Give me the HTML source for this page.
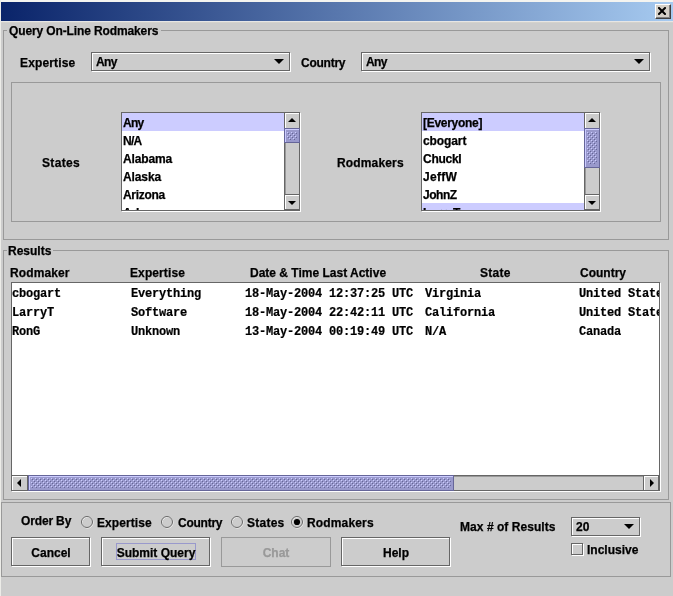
<!DOCTYPE html>
<html><head><meta charset="utf-8">
<style>
html,body{margin:0;padding:0;}
body{will-change:transform;width:673px;height:596px;background:#ccc;position:relative;overflow:hidden;font-family:"Liberation Sans",sans-serif;font-size:12px;font-weight:bold;color:#000;}
.a{position:absolute;}
.t{-webkit-text-stroke:0.25px #000;position:absolute;white-space:nowrap;line-height:15px;height:15px;margin-top:1px;}
.m{-webkit-text-stroke:0.2px #000;position:absolute;white-space:pre;line-height:15px;height:15px;margin-top:1px;font-family:"Liberation Mono",monospace;font-weight:bold;font-size:12px;letter-spacing:-0.2px;}
.grp{position:absolute;border:1px solid #999;box-sizing:border-box;}
.lbl{position:absolute;background:#ccc;height:15px;}
/* metal button-like border: element is (w-1)x(h-1) */
.mb{position:absolute;box-sizing:border-box;border:1px solid #666;box-shadow:inset 1px 1px 0 #fff,1px 1px 0 #fff;background:#ccc;}
.sp{position:absolute;box-sizing:border-box;border:1px solid #666;box-shadow:1px 1px 0 #fff;background:#fff;}
.sel{position:absolute;background:#ccf;}
.dk{position:absolute;background:#666;}
.wh{position:absolute;background:#fff;}
.thumb{position:absolute;box-sizing:border-box;background:#99c;border:1px solid #669;box-shadow:inset 1px 1px 0 #ccf;}
svg{position:absolute;display:block;}
</style></head><body>
<!-- window frame bits -->
<div class="a" style="left:0;top:0;width:673px;height:2px;background:#f4f4f0"></div>
<div class="a" style="left:0;top:0;width:1px;height:596px;background:#ecece8"></div>
<div class="a" style="left:1px;top:21px;width:672px;height:1px;background:#e6e6e6"></div>
<div class="a" style="left:1px;top:22px;width:672px;height:1px;background:#d4d2cc"></div>
<div class="a" style="left:1px;top:2px;width:672px;height:19px;background:linear-gradient(to right,#0a246a,#a6caf0)"></div>
<!-- close button -->
<div class="a" style="left:655px;top:4px;width:16px;height:15px;box-sizing:border-box;background:#d4d0c8;border:1px solid;border-color:#fff #404040 #404040 #fff;box-shadow:inset -1px -1px 0 #808080"></div>
<svg style="left:658px;top:7px" width="8" height="8" viewBox="0 0 8 8"><path d="M1 1L7 7M7 1L1 7" stroke="#000" stroke-width="2" stroke-linecap="square" fill="none"/></svg>

<!-- Query group -->
<div class="grp" style="left:3px;top:30px;width:666px;height:210px"></div>
<div class="lbl" style="left:7px;top:23px;width:154px"></div>
<div class="t" style="left:9px;top:23px;letter-spacing:-0.12px">Query On-Line Rodmakers</div>

<div class="t" style="left:20px;top:55px;letter-spacing:0.14px">Expertise</div>
<div class="mb" style="left:91px;top:52px;width:199px;height:19px"></div>
<div class="t" style="left:96px;top:54px;letter-spacing:-0.6px">Any</div>
<svg style="left:274px;top:59px" width="10" height="5"><path d="M0 0h10l-5 5z" fill="#000"/></svg>

<div class="t" style="left:301px;top:55px;letter-spacing:-0.25px">Country</div>
<div class="mb" style="left:361px;top:52px;width:289px;height:19px"></div>
<div class="t" style="left:366px;top:54px;letter-spacing:-0.6px">Any</div>
<svg style="left:634px;top:59px" width="10" height="5"><path d="M0 0h10l-5 5z" fill="#000"/></svg>

<!-- inner panel -->
<div class="grp" style="left:11px;top:82px;width:650px;height:140px"></div>
<div class="t" style="left:42px;top:155px;letter-spacing:0.35px">States</div>
<div class="t" style="left:337px;top:155px;letter-spacing:0.15px">Rodmakers</div>

<!-- States list -->
<div class="sp" style="left:121px;top:112px;width:179px;height:99px;overflow:hidden"></div>
<div class="a" style="left:122px;top:113px;width:162px;height:97px;overflow:hidden">
  <div class="sel" style="left:0;top:0;width:162px;height:18px"></div>
  <div class="t" style="left:1px;top:2px;letter-spacing:-0.7px">Any</div>
  <div class="t" style="left:1px;top:20px;letter-spacing:-0.7px">N/A</div>
  <div class="t" style="left:1px;top:38px;letter-spacing:-0.15px">Alabama</div>
  <div class="t" style="left:1px;top:56px;letter-spacing:-0.1px">Alaska</div>
  <div class="t" style="left:1px;top:74px;letter-spacing:-0.3px">Arizona</div>
  <div class="t" style="left:1px;top:92px;letter-spacing:-0.2px">Arkansas</div>
</div>
<!-- States scrollbar -->
<div class="a" id="sb1" style="left:284px;top:113px;width:15px;height:97px;background:#ccc">
  <div class="dk" style="left:0;top:0;width:1px;height:97px"></div>
  <div class="a" style="left:1px;top:0;width:1px;height:97px;background:#999"></div>
  <!-- up button -->
  <div class="a" style="left:1px;top:0;width:14px;height:15px;background:#ccc;box-shadow:inset 1px 1px 0 #fff"></div>
  <div class="dk" style="left:0;top:15px;width:15px;height:1px"></div>
  <svg style="left:4px;top:5px" width="8" height="4"><path d="M0 4h8l-4 -4z" fill="#000"/></svg>
  <!-- thumb -->
  <div class="thumb" style="left:0;top:15px;width:16px;height:15px"></div>
  <svg style="left:3px;top:19px" width="10" height="8"><rect width="10" height="8" fill="url(#bump)"/></svg>
  <!-- down button -->
  <div class="dk" style="left:0;top:81px;width:15px;height:1px"></div>
  <div class="a" style="left:1px;top:82px;width:14px;height:15px;background:#ccc;box-shadow:inset 1px 1px 0 #fff"></div>
  <svg style="left:4px;top:88px" width="8" height="4"><path d="M0 0h8l-4 4z" fill="#000"/></svg>
  <div class="dk" style="left:1px;top:96px;width:14px;height:1px"></div>
</div>

<!-- Rodmakers list -->
<div class="sp" style="left:421px;top:112px;width:179px;height:99px"></div>
<div class="a" style="left:422px;top:113px;width:162px;height:97px;overflow:hidden">
  <div class="sel" style="left:0;top:0;width:162px;height:18px"></div>
  <div class="sel" style="left:0;top:90px;width:162px;height:18px"></div>
  <div class="t" style="left:1px;top:2px;letter-spacing:-0.28px">[Everyone]</div>
  <div class="t" style="left:1px;top:20px;letter-spacing:-0.1px">cbogart</div>
  <div class="t" style="left:1px;top:38px;letter-spacing:-0.28px">ChuckI</div>
  <div class="t" style="left:1px;top:56px;letter-spacing:0.3px">JeffW</div>
  <div class="t" style="left:1px;top:74px;letter-spacing:-0.45px">JohnZ</div>
  <div class="t" style="left:1px;top:92px">LarryT</div>
</div>
<div class="a" id="sb2" style="left:584px;top:113px;width:15px;height:97px;background:#ccc">
  <div class="dk" style="left:0;top:0;width:1px;height:97px"></div>
  <div class="a" style="left:1px;top:0;width:1px;height:97px;background:#999"></div>
  <div class="a" style="left:1px;top:0;width:14px;height:15px;background:#ccc;box-shadow:inset 1px 1px 0 #fff"></div>
  <div class="dk" style="left:0;top:15px;width:15px;height:1px"></div>
  <svg style="left:4px;top:5px" width="8" height="4"><path d="M0 4h8l-4 -4z" fill="#000"/></svg>
  <div class="thumb" style="left:0;top:15px;width:16px;height:40px"></div>
  <svg style="left:3px;top:19px" width="10" height="32"><rect width="10" height="32" fill="url(#bump)"/></svg>
  <div class="dk" style="left:0;top:81px;width:15px;height:1px"></div>
  <div class="a" style="left:1px;top:82px;width:14px;height:15px;background:#ccc;box-shadow:inset 1px 1px 0 #fff"></div>
  <svg style="left:4px;top:88px" width="8" height="4"><path d="M0 0h8l-4 4z" fill="#000"/></svg>
  <div class="dk" style="left:1px;top:96px;width:14px;height:1px"></div>
</div>

<!-- Results group -->
<div class="grp" style="left:3px;top:250px;width:666px;height:250px"></div>
<div class="lbl" style="left:7px;top:243px;width:46px"></div>
<div class="t" style="left:8px;top:243px">Results</div>
<div class="t" style="left:10px;top:265px;letter-spacing:0.1px">Rodmaker</div>
<div class="t" style="left:130px;top:265px;letter-spacing:0.1px">Expertise</div>
<div class="t" style="left:250px;top:265px">Date &amp; Time Last Active</div>
<div class="t" style="left:480px;top:265px;letter-spacing:0.3px">State</div>
<div class="t" style="left:580px;top:265px">Country</div>

<div class="sp" style="left:11px;top:282px;width:649px;height:209px"></div>
<div class="a" style="left:12px;top:283px;width:647px;height:192px;overflow:hidden">
  <div class="m" style="left:0;top:3px">cbogart</div>
  <div class="m" style="left:119px;top:3px">Everything</div>
  <div class="m" style="left:233px;top:3px">18-May-2004 12:37:25 UTC</div>
  <div class="m" style="left:413px;top:3px">Virginia</div>
  <div class="m" style="left:567px;top:3px">United States</div>
  <div class="m" style="left:0;top:22px">LarryT</div>
  <div class="m" style="left:119px;top:22px">Software</div>
  <div class="m" style="left:233px;top:22px">18-May-2004 22:42:11 UTC</div>
  <div class="m" style="left:413px;top:22px">California</div>
  <div class="m" style="left:567px;top:22px">United States</div>
  <div class="m" style="left:0;top:41px">RonG</div>
  <div class="m" style="left:119px;top:41px">Unknown</div>
  <div class="m" style="left:233px;top:41px">13-May-2004 00:19:49 UTC</div>
  <div class="m" style="left:413px;top:41px">N/A</div>
  <div class="m" style="left:567px;top:41px">Canada</div>
</div>
<!-- horizontal scrollbar -->
<div class="a" id="hsb" style="left:12px;top:475px;width:647px;height:15px;background:#ccc">
  <div class="dk" style="left:0;top:0;width:647px;height:1px"></div>
  <div class="a" style="left:0;top:1px;width:647px;height:1px;background:#999"></div>
  <!-- left button -->
  <div class="a" style="left:0;top:1px;width:15px;height:14px;background:#ccc;box-shadow:inset 1px 1px 0 #fff"></div>
  <div class="dk" style="left:15px;top:0;width:1px;height:15px"></div>
  <svg style="left:5px;top:4px" width="4" height="8"><path d="M4 0v8l-4 -4z" fill="#000"/></svg>
  <!-- thumb -->
  <div class="thumb" style="left:16px;top:0;width:426px;height:16px"></div>
  <svg style="left:19px;top:3px" width="420" height="10"><rect width="420" height="10" fill="url(#bump)"/></svg>
  <!-- right button -->
  <div class="dk" style="left:631px;top:0;width:1px;height:15px"></div>
  <div class="a" style="left:632px;top:1px;width:15px;height:14px;background:#ccc;box-shadow:inset 1px 1px 0 #fff"></div>
  <svg style="left:638px;top:4px" width="4" height="8"><path d="M0 0v8l4 -4z" fill="#000"/></svg>
  <div class="dk" style="left:646px;top:1px;width:1px;height:14px"></div>
</div>

<!-- bottom panel -->
<div class="grp" style="left:1px;top:502px;width:670px;height:75px"></div>
<div class="t" style="left:21px;top:513px;letter-spacing:-0.15px">Order By</div>

<svg style="left:81px;top:516px" width="13" height="13"><circle cx="6.5" cy="6.5" r="5.5" fill="#ccc" stroke="#fff" stroke-width="1"/><circle cx="6" cy="6" r="5.5" fill="none" stroke="#666" stroke-width="1"/></svg>
<div class="t" style="left:97px;top:515px;letter-spacing:0.08px">Expertise</div>
<svg style="left:161px;top:516px" width="13" height="13"><circle cx="6.5" cy="6.5" r="5.5" fill="#ccc" stroke="#fff" stroke-width="1"/><circle cx="6" cy="6" r="5.5" fill="none" stroke="#666" stroke-width="1"/></svg>
<div class="t" style="left:178px;top:515px;letter-spacing:-0.25px">Country</div>
<svg style="left:231px;top:516px" width="13" height="13"><circle cx="6.5" cy="6.5" r="5.5" fill="#ccc" stroke="#fff" stroke-width="1"/><circle cx="6" cy="6" r="5.5" fill="none" stroke="#666" stroke-width="1"/></svg>
<div class="t" style="left:247px;top:515px;letter-spacing:0.25px">States</div>
<svg style="left:291px;top:516px" width="13" height="13"><circle cx="6.5" cy="6.5" r="5.5" fill="#ccc" stroke="#fff" stroke-width="1"/><circle cx="6" cy="6" r="5.5" fill="none" stroke="#666" stroke-width="1"/><circle cx="6" cy="6" r="3.1" fill="#000"/></svg>
<div class="t" style="left:307px;top:515px;letter-spacing:0.15px">Rodmakers</div>

<div class="mb" style="left:11px;top:537px;width:79px;height:29px"></div>
<div class="t" style="left:11px;top:545px;width:80px;text-align:center">Cancel</div>
<div class="mb" style="left:101px;top:537px;width:109px;height:29px"></div>
<div class="a" style="left:116px;top:543px;width:80px;height:17px;box-sizing:border-box;border:1px solid #99c"></div>
<div class="t" style="left:101px;top:545px;width:110px;text-align:center">Submit Query</div>
<div class="a" style="left:221px;top:537px;width:110px;height:30px;box-sizing:border-box;border:1px solid #999"></div>
<div class="t" style="left:221px;top:545px;width:110px;text-align:center;color:#999;-webkit-text-stroke-color:#999">Chat</div>
<div class="mb" style="left:341px;top:537px;width:109px;height:29px"></div>
<div class="t" style="left:341px;top:545px;width:110px;text-align:center">Help</div>

<div class="t" style="left:460px;top:519px;letter-spacing:0.05px">Max # of Results</div>
<div class="mb" style="left:571px;top:517px;width:69px;height:19px"></div>
<div class="t" style="left:576px;top:519px">20</div>
<svg style="left:624px;top:524px" width="10" height="5"><path d="M0 0h10l-5 5z" fill="#000"/></svg>
<div class="mb" style="left:571px;top:543px;width:12px;height:12px"></div>
<div class="t" style="left:587px;top:542px">Inclusive</div>

<svg width="0" height="0" style="left:0;top:0"><defs>
<pattern id="bump" width="4" height="4" patternUnits="userSpaceOnUse">
<rect x="0" y="0" width="1" height="1" fill="#ccf"/><rect x="1" y="1" width="1" height="1" fill="#669"/>
<rect x="2" y="2" width="1" height="1" fill="#ccf"/><rect x="3" y="3" width="1" height="1" fill="#669"/>
</pattern>
</defs></svg>
</body></html>
